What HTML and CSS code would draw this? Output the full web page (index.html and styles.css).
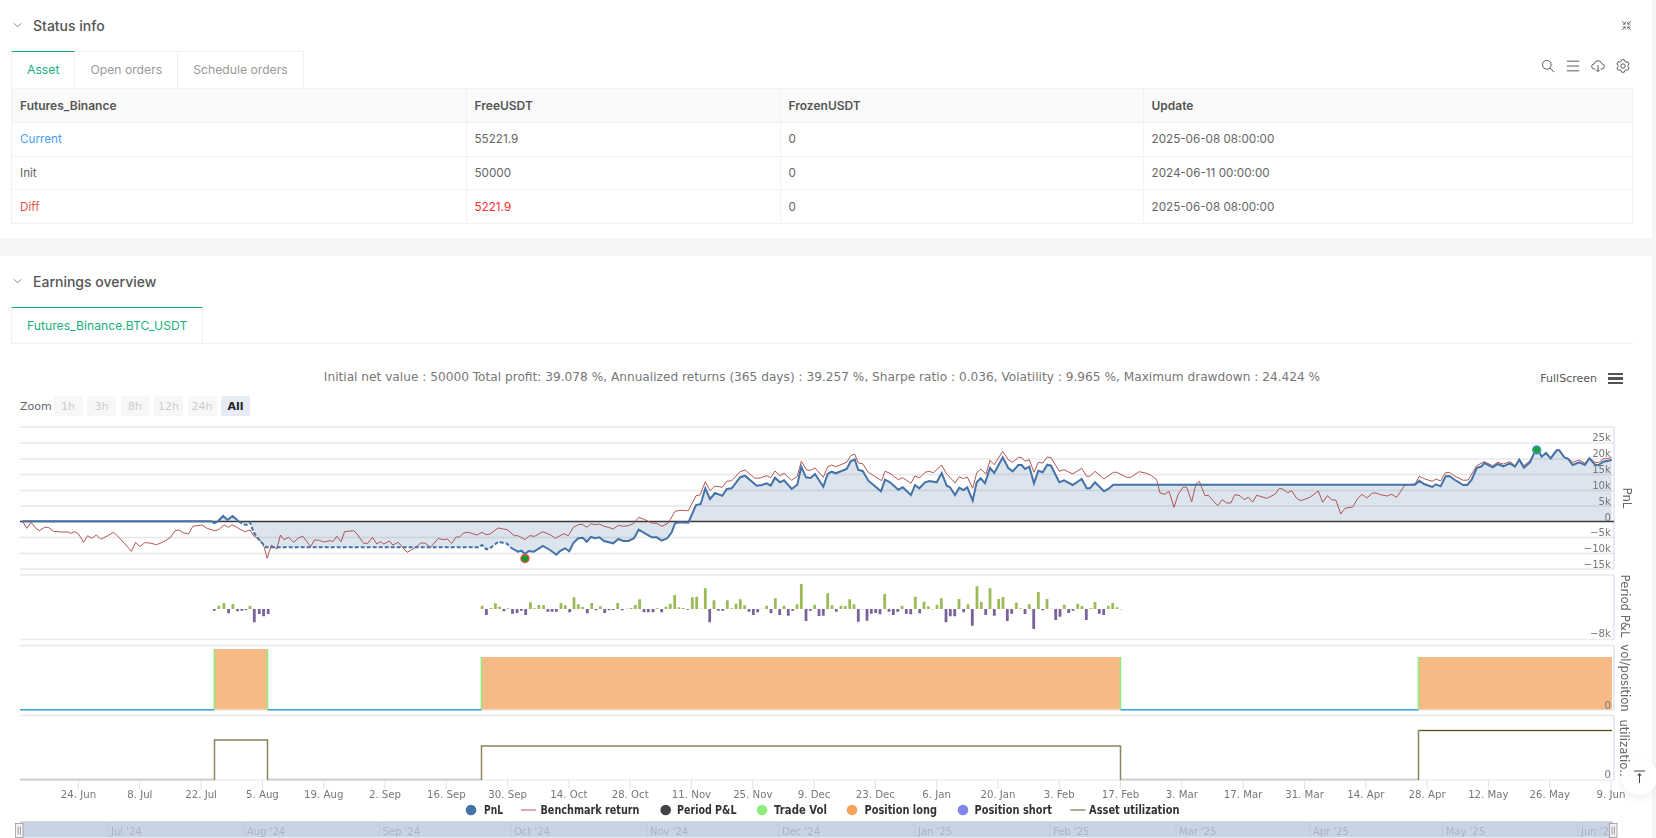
FILE: index.html
```html
<!DOCTYPE html>
<html lang="en">
<head>
    <meta charset="UTF-8">
    <meta name="viewport" content="width=device-width, initial-scale=1.0">
    <title>Backtest result</title>
    <link rel="stylesheet" href="styles.css">
</head>
<body>
    <section class="panel panel-status">
        <div class="panel-head">
            <svg class="chevron" viewBox="0 0 10 6"><path d="M1 1l4 4 4-4"/></svg>
            <h2>Status info</h2>
            <svg class="expand" viewBox="0 0 12 12"><path d="M1 1l3.5 3.5M4.5 1.8v2.7H1.8M11 1L7.5 4.5M7.5 1.8v2.7h2.7M1 11l3.5-3.5M4.5 10.2V7.5H1.8M11 11L7.5 7.5M7.5 10.2V7.5h2.7"/></svg>
        </div>
        <div class="tab-row">
            <div class="tabs">
                <div class="tab active">Asset</div>
                <div class="tab">Open orders</div>
                <div class="tab">Schedule orders</div>
            </div>
            <div class="tools">
                <svg viewBox="0 0 16 16"><circle cx="6.6" cy="6.6" r="5"/><path d="M10.3 10.3L15 15"/></svg>
                <svg viewBox="0 0 16 16"><path d="M1 2.5h14M1 8h14M1 13.5h14"/></svg>
                <svg viewBox="0 0 16 16"><path d="M5 11.5H4a3 3 0 0 1-.4-6 4.5 4.5 0 0 1 8.8 0 3 3 0 0 1-.4 6h-1M8 7v7.4M5.9 12.3L8 14.4l2.1-2.1"/></svg>
                <svg viewBox="0 0 16 16"><path d="M6.61.83h2.78l.75 1.89 1.37.79 2-.3 1.39 2.41-1.26 1.59v1.58l1.26 1.59-1.39 2.41-2-.3-1.37.79-.75 1.89H6.61l-.75-1.89-1.37-.79-2 .3-1.39-2.41 1.26-1.59V7.21L1.1 5.62l1.39-2.41 2 .3 1.37-.79z"/><circle cx="8" cy="8" r="2.5"/></svg>
            </div>
        </div>
        <table class="asset-table">
            <thead>
                <tr>
                    <th class="col-name">Futures_Binance</th>
                    <th class="col-free">FreeUSDT</th>
                    <th class="col-frozen">FrozenUSDT</th>
                    <th>Update</th>
                </tr>
            </thead>
            <tbody>
                <tr>
                    <td class="current">Current</td>
                    <td>55221.9</td>
                    <td>0</td>
                    <td>2025-06-08 08:00:00</td>
                </tr>
                <tr>
                    <td>Init</td>
                    <td>50000</td>
                    <td>0</td>
                    <td>2024-06-11 00:00:00</td>
                </tr>
                <tr>
                    <td class="diff">Diff</td>
                    <td class="diff-value">5221.9</td>
                    <td>0</td>
                    <td>2025-06-08 08:00:00</td>
                </tr>
            </tbody>
        </table>
    </section>

    <section class="panel panel-earnings">
        <div class="panel-head">
            <svg class="chevron" viewBox="0 0 10 6"><path d="M1 1l4 4 4-4"/></svg>
            <h2>Earnings overview</h2>
        </div>
        <div class="tab-line">
            <div class="tab active">Futures_Binance.BTC_USDT</div>
        </div>
        <div class="chart-title">
            <span></span>
            <span class="summary">Initial net value : 50000 Total profit: 39.078 %, Annualized returns (365 days) : 39.257 %, Sharpe ratio : 0.036, Volatility : 9.965 %, Maximum drawdown : 24.424 %</span>
            <div class="fullscreen">
                <span>FullScreen</span>
                <div class="burger"><i></i><i></i><i></i></div>
            </div>
        </div>
        <div class="zoom-row">
            <span class="zoom-label">Zoom</span>
            <button>1h</button>
            <button>3h</button>
            <button>8h</button>
            <button>12h</button>
            <button>24h</button>
            <button class="selected">All</button>
        </div>
        <svg id="chart" class="chart" viewBox="0 420 1652 418"></svg>
    </section>

    <div class="to-top">
        <svg viewBox="0 0 14 14"><path d="M1 1h12M7 14V4M5 6l2-2 2 2"/></svg>
    </div>

    <script src="chart.js"></script>
</body>
</html>
```

FILE: styles.css
```css
* {
    box-sizing: border-box;
}
html, body {
    height: 838px;
    overflow: hidden;
}
body {
    margin: 0;
    font-family: Inter, "Noto Sans", sans-serif;
    font-size: 12.2px;
    color: #666;
    background-color: #f5f6f8;
}
.panel {
    width: 1652px;
    background-color: white;
}
.panel-status {
    height: 238px;
    margin-bottom: 18px;
    padding: 0 19px 0 11px;
}
.panel-earnings {
    height: 582px;
    padding: 0 19px 0 11px;
}
.panel-head {
    display: flex;
    align-items: center;
    height: 50px;
    position: relative;
}
.panel-head h2 {
    margin: 0;
    font-size: 14px;
    font-weight: 500;
    color: #555;
}
.chevron {
    width: 9px;
    height: 6px;
    margin: 0 11px 0 2px;
    fill: none;
    stroke: #666;
    stroke-width: 0.9;
}
.expand {
    width: 11px;
    height: 11px;
    margin-left: auto;
    margin-right: 1px;
    fill: none;
    stroke: #666;
    stroke-width: 1;
}
.tab-row {
    display: flex;
    justify-content: space-between;
    align-items: center;
    margin-top: 1px;
    height: 37px;
}
.tabs {
    display: flex;
    height: 37px;
}
.tab {
    height: 37px;
    padding: 10px 15px 0;
    color: #999;
    border: 1px solid #f0f0f0;
    border-bottom: none;
    border-left: none;
    white-space: nowrap;
}
.tab.active {
    color: #19b17b;
    border-top: 1px solid #19a97a;
    border-left: 1px solid #f0f0f0;
}
.tools {
    display: flex;
    gap: 11px;
    margin-right: 3px;
    padding-bottom: 7px;
}
.tools svg {
    width: 14px;
    height: 14px;
    fill: none;
    stroke: #555;
    stroke-width: 1.1;
    overflow: visible;
}
.asset-table {
    width: 1622px;
    table-layout: fixed;
    border-collapse: collapse;
}
.asset-table th,
.asset-table td {
    height: 33.8px;
    padding: 0 8px;
    font-size: 11.7px;
    text-align: left;
    border: 1px solid #f2f2f2;
}
.asset-table th {
    font-size: 12px;
    font-weight: 600;
    color: #555;
    background-color: #fafafa;
}
.col-name {
    width: 454.5px;
}
.col-free {
    width: 314px;
}
.col-frozen {
    width: 363px;
}
.asset-table .current {
    color: #4d9ff5;
}
.asset-table .diff {
    color: #e5534b;
}
.asset-table .diff-value {
    color: #fb2c2c;
}
.tab-line {
    display: flex;
    height: 37px;
    margin-top: 1px;
    border-bottom: 1px solid #f0f0f0;
}
.tab-line .tab {
    height: 36px;
}
.chart-title {
    display: grid;
    grid-template-columns: 1fr auto 1fr;
    align-items: center;
    height: 24px;
    margin-top: 21px;
    font-family: "DejaVu Sans", sans-serif;
}
.summary {
    font-size: 12.17px;
    color: #777;
    white-space: nowrap;
}
.fullscreen {
    display: flex;
    justify-content: flex-end;
    align-items: center;
    gap: 11px;
    padding-right: 10px;
    padding-top: 3px;
    font-size: 11px;
    color: #555;
}
.burger i {
    display: block;
    width: 15px;
    height: 2.5px;
    margin: 2px 0;
    background-color: #555;
}
.zoom-row {
    display: flex;
    align-items: center;
    gap: 4.5px;
    height: 20px;
    margin-top: 7px;
    padding-left: 9px;
    font-family: "DejaVu Sans", sans-serif;
    font-size: 11px;
}
.zoom-label {
    width: 29px;
    color: #666;
}
.zoom-row button {
    width: 29px;
    height: 20px;
    padding: 0;
    font: inherit;
    color: #ccc;
    background-color: #f7f7f7;
    border: none;
    border-radius: 2px;
}
.zoom-row button.selected {
    font-weight: 700;
    color: #222;
    background-color: #e6ebf5;
}
.chart {
    position: relative;
    z-index: 1;
    display: block;
    width: 1652px;
    height: 418px;
    margin: 3px 0 0 -11px;
    overflow: visible;
    font-family: "DejaVu Sans", sans-serif;
}
.axis-label {
    font-size: 10.2px;
    fill: #777;
}
.axis-title {
    font-size: 11.7px;
    fill: #666;
}
.legend-label {
    font-size: 11.5px;
    font-weight: 700;
    fill: #333;
}
.nav-label {
    font-size: 10px;
    fill: #aab4c3;
}
.to-top {
    position: fixed;
    left: 1621px;
    top: 758px;
    width: 37px;
    height: 37px;
    display: flex;
    justify-content: center;
    align-items: center;
    border-radius: 50%;
    background-color: white;
    box-shadow: 0 2px 8px rgba(0, 0, 0, 0.08);
}
.to-top svg {
    width: 13px;
    height: 13px;
    fill: none;
    stroke: #444;
    stroke-width: 1.1;
}
```

FILE: chart.js
```js
// Values below were read off the picture, in crop pixels, so they get converted to page x/y here
const svg = document.getElementById('chart');
const NS = 'http://www.w3.org/2000/svg';

function add(name, attrs, text) {
    const el = document.createElementNS(NS, name);
    Object.keys(attrs).forEach(k => el.setAttribute(k, attrs[k]));
    if (text !== undefined) el.textContent = text;
    svg.appendChild(el);
    return el;
}

const a = (pts) => pts.map(p => [p[0] / 2.8, 420 + p[1] / 3]);
const b = (pts) => pts.map(p => [560 + p[0] / 3, 420 + p[1] / 3]);
const c = (pts) => pts.map(p => [950 + p[0] / 3, 420 + p[1] / 3]);
const d = (pts) => pts.map(p => [1300 + p[0] / 3, 350 + p[1] / 3]);

const toPath = (pts) => 'M' + pts.map(p => p[0].toFixed(1) + ' ' + p[1].toFixed(1)).join('L');

const benchmark = [].concat(
    a([[63,307],[75,328],[87,310],[100,328],[110,335],[125,325],[135,325],[150,337],[170,339],[190,339],[197,343],[210,338],[220,345],[234,370],[245,350],[257,358],[270,348],[282,361],[300,351],[318,340],[330,352],[350,375],[368,397],[380,370],[392,383],[405,371],[420,372],[438,377],[455,370],[478,355],[490,335],[500,333],[515,342],[528,344],[540,322],[565,318],[580,328],[600,335],[610,333],[628,318],[640,325],[650,317],[668,328],[685,338],[700,333],[710,350],[730,365],[740,385],[748,418],[760,378],[775,390],[785,348],[795,362],[808,355],[822,370],[835,357],[848,352],[870,383],[880,363],[895,364],[905,369],[925,365],[932,368],[943,352],[955,368],[965,338],[990,335],[1000,345],[1018,373],[1030,373],[1043,355],[1055,375],[1065,368],[1075,375],[1090,366],[1100,378],[1115,370],[1125,382],[1140,400],[1160,388],[1178,372],[1190,372],[1205,385],[1228,358],[1240,362],[1252,360],[1265,373],[1277,354],[1287,354],[1298,342],[1310,340],[1320,343],[1336,348],[1350,340],[1362,347],[1372,345],[1395,327],[1410,330],[1420,332],[1440,350],[1450,350],[1470,362],[1483,350],[1497,352],[1520,338],[1540,347],[1555,358]]),
    b([[0,350],[12,344],[25,350],[40,325],[55,317],[68,316],[80,325],[93,314],[105,317],[118,315],[132,322],[145,325],[160,330],[175,319],[190,322],[205,320],[220,314],[236,295],[250,300],[275,312],[290,313],[305,322],[325,312],[345,277],[360,274],[385,275],[408,230],[420,228],[436,188],[450,215],[465,201],[487,205],[500,187],[515,185],[540,158],[555,153],[585,178],[600,177],[620,170],[632,176],[645,156],[660,170],[672,163],[695,184],[712,172],[724,127],[740,153],[752,154],[765,147],[790,175],[803,143],[815,138],[827,143],[860,130],[872,110],[884,105],[895,132],[908,134],[925,160],[965,185],[975,157],[990,163],[1015,182],[1028,176],[1053,193],[1065,170],[1078,177],[1095,160],[1108,157],[1120,161],[1145,138],[1160,165]]),
    c([[0,175],[15,192],[28,173],[40,179],[52,174],[68,208],[80,162],[92,150],[108,165],[120,124],[133,137],[158,97],[175,122],[188,130],[205,115],[215,116],[225,127],[238,122],[252,160],[265,130],[278,132],[292,114],[303,116],[328,157],[342,152],[368,165],[395,148],[410,172],[420,172],[435,157],[462,180],[490,160],[500,160],[530,175],[543,175],[567,158],[590,163],[605,170],[620,182],[630,222],[645,226],[657,217],[672,265],[685,225],[700,204],[710,205],[725,248],[738,195],[748,187],[765,230],[775,229],[803,260],[817,242],[830,252],[842,252],[855,227],[870,230],[882,242],[895,235],[908,249],[920,229],[950,238],[975,226],[988,208],[1000,211],[1013,221],[1025,215],[1040,238],[1052,245],[1080,235],[1105,216],[1118,250],[1132,230],[1145,242],[1158,244],[1172,285],[1185,268]]),
    d([[150,475],[158,474],[172,450],[186,436],[200,447],[218,432],[228,432],[245,438],[262,441],[275,436],[290,445],[315,408],[345,405],[358,382],[375,390],[397,397],[408,390],[422,396],[435,372],[448,370],[465,382],[490,394],[505,393],[530,350],[553,338],[578,350],[593,340],[610,345],[630,338],[645,350],[658,331],[672,350],[690,335],[710,295],[725,322],[738,312],[752,326],[770,303],[778,303],[793,325],[805,328],[818,340],[838,333],[855,343],[868,326],[885,340],[895,341],[910,330],[935,326]])
);

const pnlStart = a([[63,307],[592,307],[600,312],[610,307],[625,291],[637,303],[651,291],[668,307]]);
const pnlDashed = a([[668,307],[680,315],[690,318],[700,310],[710,340],[725,362],[745,385],[1340,385],[1350,378],[1362,391],[1372,388],[1395,368],[1420,374],[1432,387]]);
const pnlEnd = [].concat(
    a([[1432,387],[1450,398],[1460,395],[1470,405],[1480,396],[1495,398],[1520,381],[1540,393],[1558,407]]),
    b([[0,396],[15,388],[28,397],[40,372],[55,358],[68,356],[80,368],[93,354],[105,358],[118,355],[132,366],[160,373],[175,360],[190,366],[205,366],[222,358],[236,332],[250,340],[275,355],[290,355],[305,365],[322,358],[335,340],[345,313],[360,310],[385,311],[408,258],[422,255],[436,208],[450,240],[465,222],[487,230],[500,210],[515,208],[540,175],[555,170],[590,200],[605,198],[620,193],[632,200],[645,176],[660,190],[672,184],[695,210],[712,197],[724,143],[738,175],[752,177],[765,165],[790,203],[803,165],[815,158],[827,163],[860,150],[872,127],[884,121],[895,153],[908,156],[925,185],[963,217],[975,182],[990,190],[1015,212],[1028,205],[1053,228],[1065,198],[1078,208],[1095,190],[1108,186],[1130,190],[1145,162],[1160,200]]),
    c([[0,205],[15,228],[28,206],[40,213],[52,205],[68,245],[80,190],[92,178],[105,193],[120,147],[133,162],[158,115],[175,147],[188,157],[205,138],[215,138],[225,150],[238,143],[252,193],[265,155],[278,160],[292,137],[303,140],[328,190],[342,184],[368,198],[395,180],[410,208],[420,208],[435,190],[462,217],[475,210],[490,197],[510,197]]),
    d([[345,407],[358,395],[372,405],[397,414],[408,406],[422,412],[437,382],[448,381],[465,393],[490,408],[502,408],[515,392],[530,357],[545,352],[553,342],[578,355],[593,345],[610,352],[630,343],[645,353],[658,332],[672,356],[690,340],[710,296],[725,323],[738,312],[752,328],[770,304],[778,304],[793,325],[805,330],[818,348],[838,340],[855,348],[868,328],[885,347],[895,349],[910,338],[935,333]])
);

// Bars of the Period P&L pane: [crop x, height above/below the zero line]
const bars = [].concat(
    a([[600,-5],[613,10],[627,18],[640,-13],[652,15],[665,-7],[677,-5],[688,-3],[700,10],[712,-40],[726,-15],[738,-22],[751,-15],[1350,10],[1362,-18],[1375,3],[1387,17],[1399,7],[1411,-7],[1423,2],[1435,-14],[1448,-12],[1460,-5],[1472,-18],[1485,20],[1497,2],[1509,12],[1522,12],[1534,-8],[1546,-8],[1558,-8]]),
    b([[3,18],[16,11],[29,-10],[42,35],[55,14],[68,6],[82,-13],[95,18],[108,-4],[121,8],[134,-12],[147,-4],[160,-3],[173,18],[187,-4],[200,1],[213,3],[226,12],[239,29],[252,-10],[265,-10],[279,-10],[292,2],[305,-10],[318,7],[331,16],[344,42],[357,5],[370,3],[383,-2],[397,35],[410,37],[423,1],[436,62],[449,-40],[462,26],[475,-5],[488,-5],[502,26],[515,2],[528,16],[541,29],[554,11],[567,-8],[580,-18],[593,-10],[606,1],[620,10],[633,-13],[646,32],[659,-18],[672,10],[685,-20],[698,-5],[711,14],[724,75],[738,-36],[751,-5],[764,13],[777,-21],[790,-20],[803,47],[816,11],[829,-8],[843,10],[856,9],[869,29],[882,14],[895,-38],[908,-1],[921,-35],[934,-14],[947,-12],[960,-16],[974,45],[987,-8],[1000,-18],[1013,-8],[1026,10],[1039,-14],[1052,-16],[1066,37],[1079,-13],[1092,22],[1105,8],[1118,-1],[1131,13],[1144,32],[1158,-40]]),
    c([[1,-22],[14,-22],[27,30],[41,-10],[54,14],[67,-50],[81,68],[94,21],[107,-18],[120,62],[133,-20],[146,30],[159,36],[172,-36],[185,-14],[199,19],[212,2],[225,-15],[238,14],[251,-60],[265,51],[278,-4],[291,30],[304,1],[317,-33],[330,-23],[343,13],[356,-12],[369,-5],[383,16],[396,9],[409,-33],[422,2],[435,21],[448,-14],[461,-18],[475,10],[488,18],[501,5],[514,-1]])
);

// a-c add an offset to y, the bars only want the height
const barPaths = { up: '', down: '' };
bars.forEach(bar => {
    const h = bar[1] - 420;
    const x = bar[0].toFixed(1);
    if (h > 0) barPaths.up += 'M' + x + ' 610V' + (610 - h).toFixed(1);
    else barPaths.down += 'M' + x + ' 610V' + (610 - h).toFixed(1);
});

const LEFT = 20;
const RIGHT = 1614;

// grid lines of the PnL pane
[428, 444, 460, 475.5, 491.5, 507, 538.5, 554.5, 570].forEach(y => {
    add('line', { x1: LEFT, x2: RIGHT, y1: y, y2: y, stroke: '#e8e8e8', 'stroke-width': 1.4 });
});

// pane frames
[[576, 640.5], [646.5, 711], [716.5, 781]].forEach(p => {
    add('line', { x1: LEFT, x2: RIGHT, y1: p[0], y2: p[0], stroke: '#e8e8e8', 'stroke-width': 1.4 });
    add('line', { x1: LEFT, x2: RIGHT, y1: p[1], y2: p[1], stroke: '#ececec', 'stroke-width': 1.4 });
    add('line', { x1: RIGHT, x2: RIGHT, y1: p[0], y2: p[1], stroke: '#ccd6eb' });
});
add('line', { x1: RIGHT, x2: RIGHT, y1: 428, y2: 570, stroke: '#ccd6eb' });

// PnL pane
const pnlAll = pnlStart.concat(pnlDashed, pnlEnd);
add('path', { d: toPath(pnlAll) + 'L1611.7 522.5L22.5 522.5Z', fill: 'rgba(69,114,167,0.19)' });
add('line', { x1: LEFT, x2: RIGHT, y1: 522.5, y2: 522.5, stroke: '#3a3a3a', 'stroke-width': 1.4 });
add('path', { d: toPath(benchmark), fill: 'none', stroke: '#aa4643', 'stroke-width': 1, 'stroke-opacity': 0.9 });
add('path', { d: toPath(pnlStart), fill: 'none', stroke: '#4572a7', 'stroke-width': 2 });
add('path', { d: toPath(pnlDashed), fill: 'none', stroke: '#4572a7', 'stroke-width': 2, 'stroke-dasharray': '4 2' });
add('path', { d: toPath(pnlEnd), fill: 'none', stroke: '#4572a7', 'stroke-width': 2 });
add('circle', { cx: 1536.7, cy: 451, r: 4, fill: '#1ea33a', stroke: '#4a9ac4', 'stroke-width': 1.5 });
add('circle', { cx: 525, cy: 559.5, r: 4, fill: '#109a2a', stroke: '#e8504a', 'stroke-width': 1.5 });

// Period P&L pane
add('path', { d: barPaths.up, stroke: '#9bbb59', 'stroke-width': 2.8 });
add('path', { d: barPaths.down, stroke: '#7a6299', 'stroke-width': 2.8 });

// position pane
[[214.3, 267.5, 650], [481.4, 1120.5, 658], [1418.5, 1612, 658]].forEach(r => {
    add('rect', { x: r[0], y: r[2], width: r[1] - r[0], height: 710.5 - r[2], fill: '#f7ba86' });
    add('line', { x1: r[0], x2: r[0], y1: r[2], y2: 710.5, stroke: '#90ed7d', 'stroke-width': 1.6 });
    if (r[1] < 1600) add('line', { x1: r[1], x2: r[1], y1: r[2], y2: 710.5, stroke: '#90ed7d', 'stroke-width': 1.6 });
});
add('path', { d: 'M20 710.7H214.3M267.5 710.7H481.4M1120.5 710.7H1418.5', stroke: '#3aa5d8', 'stroke-width': 1.6 });

// utilization pane
add('path', { d: 'M20 780.5H214.3M267.5 780.5H481.4M1120.5 780.5H1418.5', stroke: '#cfcfcb', 'stroke-width': 2 });
add('path', {
    d: 'M214.5 781V741H267.5V781M481.5 781V747H1120.5V781M1418.5 781V731.5H1612',
    fill: 'none', stroke: '#8a8460', 'stroke-width': 1.5
});
add('path', { d: 'M1420 731.5H1612', stroke: '#5a5318', 'stroke-width': 1.2 });

// y axis labels
[['25k', 438], ['20k', 454.3], ['15k', 469.7], ['10k', 485.7], ['5k', 501.7], ['0', 517.7],
 ['−5k', 532.7], ['−10k', 548.7], ['−15k', 564.7], ['−8k', 634], ['0', 705.7], ['0', 775]].forEach(l => {
    add('text', { x: 1611, y: l[1] + 4, 'text-anchor': 'end', class: 'axis-label' }, l[0]);
});

// pane titles, rotated along the right edge
[['PnL', 1623, 499], ['Period P&L', 1621, 607], ['vol/position', 1620.5, 679], ['utilizatio..', 1620, 749]].forEach(t => {
    add('text', {
        x: t[1], y: t[2], 'text-anchor': 'middle', class: 'axis-title',
        transform: 'rotate(90 ' + t[1] + ' ' + t[2] + ')'
    }, t[0]);
});

// date axis
const dates = ['24. Jun', '8. Jul', '22. Jul', '5. Aug', '19. Aug', '2. Sep', '16. Sep', '30. Sep', '14. Oct', '28. Oct',
    '11. Nov', '25. Nov', '9. Dec', '23. Dec', '6. Jan', '20. Jan', '3. Feb', '17. Feb', '3. Mar', '17. Mar', '31. Mar',
    '14. Apr', '28. Apr', '12. May', '26. May', '9. Jun'];
dates.forEach((label, i) => {
    const x = 78.5 + i * 61.3;
    add('line', { x1: x, x2: x, y1: 781, y2: 790, stroke: '#dbe2f0' });
    add('text', { x: x, y: 799, 'text-anchor': 'middle', class: 'axis-label' }, label);
});

// legend, bold DejaVu runs wider than the original so the width is fixed per item
[['dot', 471, '#4572a7', 484, 'PnL', 19],
 ['line', 521, '#d08a88', 540.5, 'Benchmark return', 99],
 ['dot', 665.7, '#434348', 677, 'Period P&L', 59.5],
 ['dot', 762, '#90ed7d', 774, 'Trade Vol', 53],
 ['dot', 852, '#f7a35c', 864.5, 'Position long', 72.5],
 ['dot', 963, '#8085e9', 974.5, 'Position short', 77.5],
 ['line', 1070.5, '#8a8460', 1089, 'Asset utilization', 90.5]].forEach(item => {
    if (item[0] === 'dot') add('circle', { cx: item[1], cy: 811, r: 5.3, fill: item[2] });
    else add('line', { x1: item[1], x2: item[1] + 15, y1: 811, y2: 811, stroke: item[2], 'stroke-width': 1.4 });
    add('text', { x: item[3], y: 815, class: 'legend-label', textLength: item[5], lengthAdjust: 'spacingAndGlyphs' }, item[4]);
});

// navigator strip
add('rect', { x: LEFT, y: 822.5, width: RIGHT - LEFT - 1, height: 16, fill: '#c8d4e4' });
add('line', { x1: LEFT, x2: RIGHT - 1, y1: 822.5, y2: 822.5, stroke: '#d4d8de', 'stroke-width': 1 });
[['Jul \'24', 108], ['Aug \'24', 244], ['Sep \'24', 379.5], ['Oct \'24', 511], ['Nov \'24', 647], ['Dec \'24', 779],
 ['Jan \'25', 915], ['Feb \'25', 1050], ['Mar \'25', 1176], ['Apr \'25', 1310], ['May \'25', 1442.7], ['Jun \'25', 1578]].forEach(m => {
    add('line', { x1: m[1], x2: m[1], y1: 823, y2: 838, stroke: '#bfcbdc' });
    add('text', { x: m[1] + 3, y: 835.5, class: 'nav-label' }, m[0]);
});
[15.5, 1609.5].forEach(x => {
    add('rect', { x: x, y: 824.5, width: 7.5, height: 14, fill: '#f2f2f2', stroke: '#999', 'stroke-width': 0.8 });
    add('path', { d: 'M' + (x + 2.6) + ' 827.5v8M' + (x + 4.9) + ' 827.5v8', stroke: '#888', 'stroke-width': 0.8 });
});
```
